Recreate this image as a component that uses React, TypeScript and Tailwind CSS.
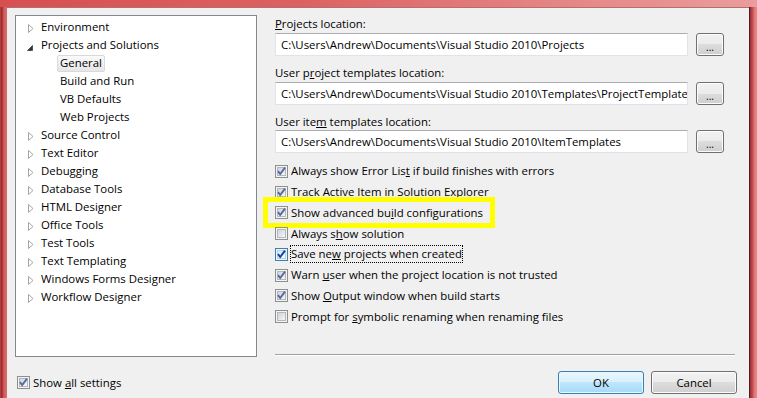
import { ReactNode } from 'react';

type TreeItem = { label: string; kind: 'closed' | 'open' | 'child'; selected?: boolean };

const TREE: TreeItem[] = [
  { label: 'Environment', kind: 'closed' },
  { label: 'Projects and Solutions', kind: 'open' },
  { label: 'General', kind: 'child', selected: true },
  { label: 'Build and Run', kind: 'child' },
  { label: 'VB Defaults', kind: 'child' },
  { label: 'Web Projects', kind: 'child' },
  { label: 'Source Control', kind: 'closed' },
  { label: 'Text Editor', kind: 'closed' },
  { label: 'Debugging', kind: 'closed' },
  { label: 'Database Tools', kind: 'closed' },
  { label: 'HTML Designer', kind: 'closed' },
  { label: 'Office Tools', kind: 'closed' },
  { label: 'Test Tools', kind: 'closed' },
  { label: 'Text Templating', kind: 'closed' },
  { label: 'Windows Forms Designer', kind: 'closed' },
  { label: 'Workflow Designer', kind: 'closed' },
];

function Check({ on, focus }: { on: boolean; focus?: boolean }) {
  return (
    <span
      className={`relative flex h-[13px] w-[13px] shrink-0 items-center justify-center border bg-[#f4f4f4] ${
        focus ? 'border-[#3c7fb1]' : 'border-[#8e8f8f]'
      }`}
    >
      <span
        className={`h-[9px] w-[9px] border ${
          focus
            ? 'border-[#a9d6f5] bg-[linear-gradient(135deg,#d4ecfb,#f7fcff)]'
            : 'border-[#b4b8bd] bg-[linear-gradient(135deg,#d0d3d8,#f7f7f7)]'
        }`}
      />
      {on && (
        <svg width="13" height="13" viewBox="0 0 13 13" className="absolute left-[-1px] top-[-1px]">
          <path
            d="M3 6.2 L5.2 9 L10 2.6"
            fill="none"
            stroke={focus ? '#1d3c9a' : '#5569a0'}
            strokeWidth="1.9"
          />
        </svg>
      )}
    </span>
  );
}

function TextBox({ value }: { value: string }) {
  return (
    <div className="flex h-[23px] min-w-0 flex-1 items-center overflow-hidden whitespace-nowrap border border-[#e2e3ea] border-t-[#abadb3] bg-white pl-[5px]">
      {value}
    </div>
  );
}

function Browse() {
  return (
    <button className="flex h-[23px] w-[28px] shrink-0 items-end justify-center rounded-[3px] border border-[#707070] bg-[linear-gradient(#f2f2f2_0%,#ebebeb_50%,#dddddd_50%,#cfcfcf_100%)] pb-[3px] text-[10px] leading-none shadow-[inset_0_0_0_1px_#fcfcfc]">
      ...
    </button>
  );
}

function Option({ on, focus, children }: { on: boolean; focus?: boolean; children: ReactNode }) {
  return (
    <div className="flex h-[20.75px] items-center">
      <Check on={on} focus={focus} />
      <span
        className={`ml-[3px] leading-[16px] ${focus ? 'outline-1 outline-dotted outline-black' : ''}`}
      >
        {children}
      </span>
    </div>
  );
}

export default function App() {
  return (
    <div className="flex h-[398px] w-[757px] flex-col overflow-hidden font-['Open_Sans',sans-serif] text-[11.4px] text-black">
      {/* frame top */}
      <div className="h-[7px] shrink-0 bg-[linear-gradient(90deg,#d65050_0%,#dc6262_40%,#e58686_75%,#eb9c9c_100%)]" />
      <div className="flex min-h-0 flex-1">
        <div className="w-[7px] shrink-0 bg-[linear-gradient(90deg,#c04646_0%,#9e2628_25%,#cf5e5e_55%,#d86e6e_100%)]" />

        {/* dialog body */}
        <div className="flex min-w-0 flex-1 flex-col border-t border-[#b07070] bg-[#f0f0f0] pl-[8px] pt-[7px]">
          <div className="flex h-[342px]">
            {/* tree */}
            <div className="w-[242px] shrink-0 border border-[#828790] bg-white pt-[2px]">
              {TREE.map((t) => (
                <div key={t.label} className="relative flex h-[18px] items-center">
                  {t.kind === 'closed' && (
                    <svg width="6" height="9" viewBox="0 0 6 9" className="absolute left-[12px] top-[6px]">
                      <path d="M0.5 0.5 L5 4.5 L0.5 8.5 Z" fill="#fff" stroke="#a6a6a6" />
                    </svg>
                  )}
                  {t.kind === 'open' && (
                    <svg width="6" height="6" viewBox="0 0 6 6" className="absolute left-[11px] top-[9px]">
                      <path d="M5.5 0.5 L5.5 5.5 L0.5 5.5 Z" fill="#333" stroke="#555" />
                    </svg>
                  )}
                  {t.kind === 'child' ? (
                    <span
                      className={`ml-[41px] flex h-[17px] items-center rounded-[2px] border px-[2px] ${
                        t.selected
                          ? 'border-[#d9d9d9] bg-[linear-gradient(#fafafa,#e6e6e6)]'
                          : 'border-transparent'
                      }`}
                    >
                      {t.label}
                    </span>
                  ) : (
                    <span className="ml-[25px]">{t.label}</span>
                  )}
                </div>
              ))}
            </div>

            {/* settings */}
            <div className="ml-[18px] flex w-[460px] flex-col">
              <div className="h-[16px] pt-[1px] leading-[16px]">
                <u>P</u>rojects location:
              </div>
              <div className="mt-[2px] flex items-center gap-[8px] pr-[11px]">
                <TextBox value="C:\Users\Andrew\Documents\Visual Studio 2010\Projects" />
                <Browse />
              </div>

              <div className="mt-[8px] h-[16px] pt-[1px] leading-[16px]">
                User p<u>r</u>oject templates location:
              </div>
              <div className="mt-[2px] flex items-center gap-[8px] pr-[11px]">
                <TextBox value="C:\Users\Andrew\Documents\Visual Studio 2010\Templates\ProjectTemplates" />
                <Browse />
              </div>

              <div className="mt-[8px] h-[16px] pt-[1px] leading-[16px]">
                User ite<u>m</u> templates location:
              </div>
              <div className="mt-[1px] flex items-center gap-[8px] pr-[11px]">
                <TextBox value="C:\Users\Andrew\Documents\Visual Studio 2010\ItemTemplates" />
                <Browse />
              </div>

              <div className="mt-[8px] flex flex-col">
                <Option on>
                  Always show Error Lis<u>t</u> if build finishes with errors
                </Option>
                <Option on>Track Active Item in Solution Explorer</Option>
                <div className="relative">
                  <Option on>
                    Show advanced bu<u>i</u>ld configurations
                  </Option>
                  <div className="pointer-events-none absolute left-[-12.5px] top-[-6px] h-[31px] w-[232px] border-[5px] border-[#ffff00]" />
                </div>
                <Option on={false}>
                  Always s<u>h</u>ow solution
                </Option>
                <Option on focus>
                  Save ne<u>w</u> projects when created
                </Option>
                <Option on>
                  Warn <u>u</u>ser when the project location is not trusted
                </Option>
                <Option on>
                  Show <u>O</u>utput window when build starts
                </Option>
                <Option on={false}>
                  Prompt for <u>s</u>ymbolic renaming when renaming files
                </Option>
              </div>

              <div className="mb-[1px] mt-auto border-t border-b border-t-[#a0a0a0] border-b-white" />
            </div>
          </div>

          {/* footer */}
          <div className="mt-[14px] flex items-center pr-[12px]">
            <div className="ml-[2px] flex items-center">
              <Check on />
              <span className="ml-[3px]">
                Show <u>a</u>ll settings
              </span>
            </div>
            <div className="ml-auto flex gap-[7px]">
              <button className="h-[23px] w-[86px] rounded-[3px] border border-[#3c7fb1] bg-[linear-gradient(#eaf6fd_0%,#d9f0fc_50%,#bee6fd_50%,#a7d9f5_100%)] shadow-[inset_0_0_0_1px_#e8f6fe]">
                OK
              </button>
              <button className="h-[23px] w-[86px] rounded-[3px] border border-[#707070] bg-[linear-gradient(#f2f2f2_0%,#ebebeb_50%,#dddddd_50%,#cfcfcf_100%)] shadow-[inset_0_0_0_1px_#fcfcfc]">
                Cancel
              </button>
            </div>
          </div>
        </div>

        <div className="w-[8px] shrink-0 border-l border-[#561c20] bg-[linear-gradient(90deg,#9c2c38_0%,#c24a52_35%,#e07878_65%,#e88888_100%)]" />
      </div>
    </div>
  );
}
